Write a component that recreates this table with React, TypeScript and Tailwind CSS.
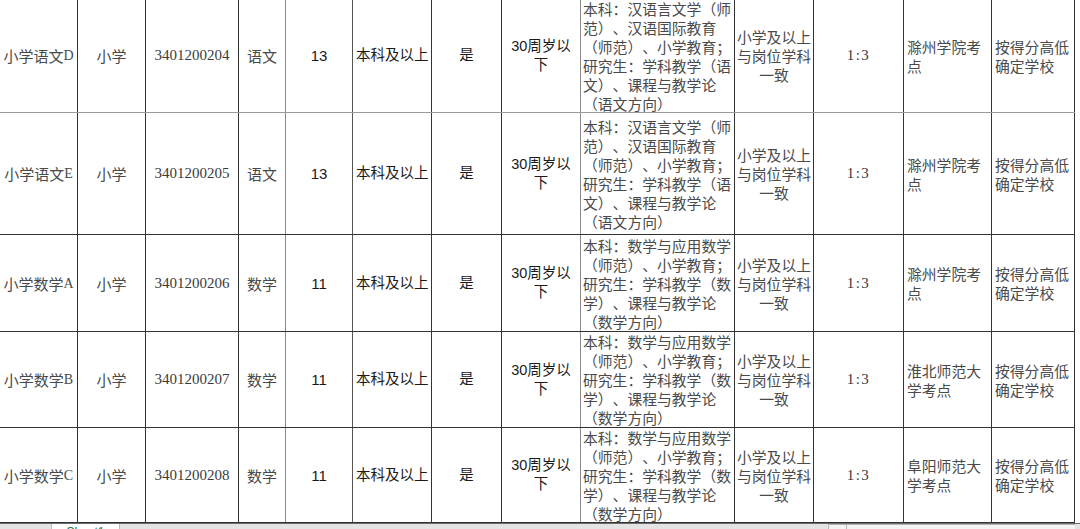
import React from "react";

const SERIF = "font-['Noto_Sans_CJK_SC','Liberation_Serif',serif] text-[#4a4a4a] [text-spacing-trim:space-all]";
const LATIN_SERIF = "font-['Liberation_Serif','Noto_Sans_CJK_SC',serif] text-[#3a3a3a] [text-spacing-trim:space-all]";
const SANS = "font-['Liberation_Sans','Noto_Sans_CJK_SC',sans-serif] text-[#1a1a1a]";

type Row = {
  h: string;
  name: string;
  letter: string;
  code: string;
  subj: string;
  num: string;
  major: string[];
  site: string[];
  bottom: string;
};

const rows: Row[] = [
  {
    h: "h-[114px]",
    name: "小学语文",
    letter: "D",
    code: "3401200204",
    subj: "语文",
    num: "13",
    major: ["本科：汉语言文学（师", "范）、汉语国际教育", "（师范）、小学教育；", "研究生：学科教学（语", "文）、课程与教学论", "（语文方向）"],
    site: ["滁州学院考", "点"],
    bottom: "border-[#9a9a9a]",
  },
  {
    h: "h-[122px]",
    name: "小学语文",
    letter: "E",
    code: "3401200205",
    subj: "语文",
    num: "13",
    major: ["本科：汉语言文学（师", "范）、汉语国际教育", "（师范）、小学教育；", "研究生：学科教学（语", "文）、课程与教学论", "（语文方向）"],
    site: ["滁州学院考", "点"],
    bottom: "border-[#333]",
  },
  {
    h: "h-[97px]",
    name: "小学数学",
    letter: "A",
    code: "3401200206",
    subj: "数学",
    num: "11",
    major: ["本科：数学与应用数学", "（师范）、小学教育；", "研究生：学科教学（数", "学）、课程与教学论", "（数学方向）"],
    site: ["滁州学院考", "点"],
    bottom: "border-[#333]",
  },
  {
    h: "h-[96px]",
    name: "小学数学",
    letter: "B",
    code: "3401200207",
    subj: "数学",
    num: "11",
    major: ["本科：数学与应用数学", "（师范）、小学教育；", "研究生：学科教学（数", "学）、课程与教学论", "（数学方向）"],
    site: ["淮北师范大", "学考点"],
    bottom: "border-[#333]",
  },
  {
    h: "h-[95px]",
    name: "小学数学",
    letter: "C",
    code: "3401200208",
    subj: "数学",
    num: "11",
    major: ["本科：数学与应用数学", "（师范）、小学教育；", "研究生：学科教学（数", "学）、课程与教学论", "（数学方向）"],
    site: ["阜阳师范大", "学考点"],
    bottom: "border-[#333]",
  },
];

const cellBase = "flex items-center border-r whitespace-nowrap overflow-hidden leading-[19px]";

function Lines({ lines }: { lines: string[] }) {
  return (
    <div>
      {lines.map((l, i) => (
        <div key={i}>{l}</div>
      ))}
    </div>
  );
}

export default function App() {
  return (
    <div className="w-[1080px] h-[529px] bg-white overflow-hidden flex flex-col">
      <div className="h-[523px] overflow-hidden">
        <div className="-mt-px w-[1075px]">
          {rows.map((r, i) => (
            <div
              key={i}
              className={`${r.h} grid grid-cols-[78px_68px_93px_47px_67px_79px_70px_79px_154px_79px_90px_88px_83px] border-b ${r.bottom}`}
            >
              <div className={`${cellBase} border-[#333] justify-center text-[15px] ${SERIF}`}>
                {r.name}
                <span className="font-['Liberation_Serif',serif] text-[14px]">{r.letter}</span>
              </div>
              <div className={`${cellBase} border-[#333] justify-center text-[15px] ${SERIF}`}>小学</div>
              <div className={`${cellBase} border-[#333] justify-center text-[15px] ${LATIN_SERIF}`}>{r.code}</div>
              <div className={`${cellBase} border-[#8a8a8a] justify-center text-[15px] ${SERIF}`}>{r.subj}</div>
              <div className={`${cellBase} border-[#555] justify-center text-[15px] ${SANS}`}>{r.num}</div>
              <div className={`${cellBase} border-[#333] pl-[3px] text-[14.5px] ${SANS}`}>本科及以上</div>
              <div className={`${cellBase} border-[#333] justify-center text-[14.5px] ${SANS}`}>是</div>
              <div className={`${cellBase} border-[#8a8a8a] justify-center text-center text-[14.5px] ${SANS}`}>
                <div>
                  <div>30周岁以</div>
                  <div>下</div>
                </div>
              </div>
              <div className={`${cellBase} border-[#333] pl-[2px] text-[14.8px] ${SERIF}`}>
                <Lines lines={r.major} />
              </div>
              <div className={`${cellBase} border-[#333] justify-center text-center text-[14.8px] ${SERIF}`}>
                <Lines lines={["小学及以上", "与岗位学科", "一致"]} />
              </div>
              <div className={`${cellBase} border-[#333] justify-center text-[15px] tracking-[1.5px] ${LATIN_SERIF}`}>1:3</div>
              <div className={`${cellBase} border-[#333] pl-[3px] text-[14.8px] ${SERIF}`}>
                <Lines lines={r.site} />
              </div>
              <div className={`${cellBase} border-[#333] pl-[3px] text-[14.8px] ${SERIF}`}>
                <Lines lines={["按得分高低", "确定学校"]} />
              </div>
            </div>
          ))}
        </div>
      </div>
      <div className="h-[6px] border-t border-[#6a6a6a] bg-[#e4e4e4] flex items-stretch">
        <div className="w-[52px] border-r border-[#bdbdbd]" />
        <div className="w-[68px] bg-white border-r border-[#bdbdbd] overflow-hidden flex justify-center">
          <span className="text-[12px] leading-none pt-[2px] text-[#217346] font-['Liberation_Sans',sans-serif]">Sheet1</span>
        </div>
        <div className="flex-1" />
        <div className="w-[247px] bg-[#f4f4f4] border-l border-t border-[#b5b5b5] flex">
          <div className="w-[18px] border-r border-[#b5b5b5]" />
        </div>
        <div className="w-[5px]" />
      </div>
    </div>
  );
}
